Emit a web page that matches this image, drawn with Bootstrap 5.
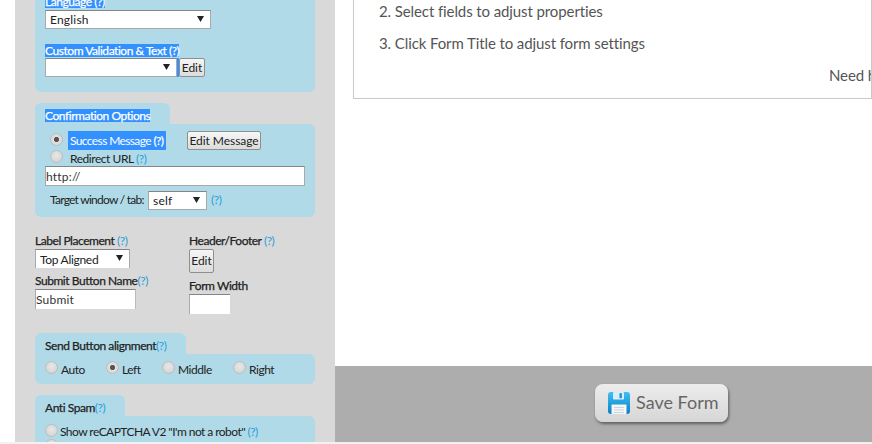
<!DOCTYPE html>
<html lang="en">
<head>
<meta charset="utf-8">
<title>Form builder</title>
<link href="https://cdn.jsdelivr.net/npm/bootstrap@5.3.0/dist/css/bootstrap.min.css" rel="stylesheet">
<style>
html,body{height:444px;width:872px;overflow:hidden;background:#fff;}
body{font-family:"Lato","Liberation Sans",sans-serif;font-size:12px;color:#222;line-height:1.2;letter-spacing:-.45px;}
.shell{height:442px;overflow:hidden;}
.gutter{width:15px;flex:none;}
.side{width:320px;flex:none;background:#d9d9d9;padding:0 20px;overflow:hidden;white-space:nowrap;}
.work{flex:1;min-width:0;}
.stage{height:366px;overflow:hidden;padding-left:18px;}
.tipsbox{height:99px;border:1px solid #c9c9c9;border-top:0;padding-left:25px;color:#555;font-size:15px;letter-spacing:-.1px;overflow:hidden;white-space:nowrap;}
.tipsbox p{margin:0;}
.tip2{padding-top:2px;height:34px;}
.tip3{height:32px;}
.need{padding-left:450px;}
.savebar{height:76px;background:#adadad;padding-left:260px;padding-top:18px;}
.savebtn{width:133px;height:38px;border:0;border-radius:8px;background:linear-gradient(#ededed,#d6d6d6);box-shadow:1px 2px 3px rgba(0,0,0,.45);color:#666;font-size:18px;font-family:"Lato",sans-serif;letter-spacing:0;padding:0 0 0 13px;gap:6px;}
.bottomline{height:2px;background:#f1f1f1;}
.panelbody{background:#b0dae8;border-radius:0 6px 6px 6px;}
.paneltab{background:#b0dae8;border-radius:6px 6px 0 0;padding-left:10px;display:block;}
.firstpanel{height:97px;margin-top:-5px;padding:0 10px;margin-bottom:11px;border-radius:0 0 6px 6px;}
.sel{color:#fff;background:#3390ff;}
.lbl{font-weight:400;-webkit-text-stroke:.25px currentColor;font-size:12px;line-height:13px;display:block;}
.lbl.sel{width:max-content;}
.lbl .hint{-webkit-text-stroke:0;}
.hint{color:#2a9fd8;font-weight:400;}
.sel .hint{color:#fff;-webkit-text-stroke:.25px #fff;}
.dropper{appearance:none;-webkit-appearance:none;border:1px solid #a9a9a9;border-top-color:#858585;background-color:#fff;background-image:url("data:image/svg+xml,%3Csvg xmlns='http://www.w3.org/2000/svg' width='7' height='6'%3E%3Cpath d='M0 0H7L3.5 6Z' fill='%23222'/%3E%3C/svg%3E");background-repeat:no-repeat;background-position:right 6px top 5px;font-size:12px;font-family:inherit;color:#222;padding:0 0 0 4px;height:19px;line-height:17px;border-radius:0;letter-spacing:.2px;outline:0;}
.d-lang{width:166px;display:block;margin-top:2px;}
.d-val{width:132px;}
.gaplang{height:15px;}
.valrow{padding-top:1px;}
.d-target{width:59px;}
.d-place{width:95px;display:block;border-bottom:0;margin-top:1px;letter-spacing:-.3px;}
.flatbtn{border:1px solid #8f8f8f;border-radius:2px;background:linear-gradient(#f6f6f6,#dcdcdc);font-size:12px;font-family:inherit;letter-spacing:-.05px;color:#222;padding:0;height:19px;line-height:16px;}
.edit1{width:26px;}
.caretbar{width:2px;height:19px;background:#3390ff;}
.textbox{border:1px solid #a9a9a9;border-top-color:#858585;background:#fff;font-size:12px;font-family:inherit;color:#333;padding:0;height:20px;border-radius:0;outline:0;display:block;letter-spacing:.2px;}
.tab-conf{width:135px;height:21px;padding-top:6px;}
.panel-conf{height:93px;padding:7px 10px 0;margin-bottom:17px;}
.radio{appearance:none;-webkit-appearance:none;width:13px;height:13px;border-radius:50%;border:1px solid #bdbdbd;background:radial-gradient(circle at 50% 40%,#e8e8e8,#cfcfcf);margin:0;flex:none;display:block;}
.radio:checked{background:radial-gradient(circle,#555 0,#555 28%,#e2e2e2 38%,#cfcfcf 100%);}
.rowmsg{padding-left:5px;height:19px;}
.rowmsg .radio{margin-top:-2px;}
.rowmsg .sel{margin-left:5px;width:98px;height:19px;padding:0 0 0 2px;line-height:19px;display:block;letter-spacing:-.62px;}
.rowmsg .flatbtn{margin-left:21px;width:74px;}
.rowurl{padding-left:5px;height:16px;}
.rowurl .radio{margin-top:-4px;}
.rowurl span.t{margin-left:7px;padding-top:2px;}
.url{width:260px;}
.rowtarget{padding:5px 0 0 5px;}
.targetlabel{width:98px;flex:none;letter-spacing:-.75px;}
.fields{height:99px;}
.colA{width:154px;flex:none;}
.lbl2{display:block;font-weight:400;-webkit-text-stroke:.25px currentColor;font-size:12px;line-height:14px;}
.lbl2 .hint{-webkit-text-stroke:0;}
.sbname{margin-top:6px;}
.sbbox{width:101px;margin-top:1px;border-bottom:0;border-right:1px solid #bbb;}
.editbtn2{display:block;width:25px;height:24px;margin-top:1px;}
.fwidth{margin-top:6px;}
.widthbox{width:41px;margin-top:1px;border-bottom:0;border-right:0;}
.tabsend{width:151px;height:21px;padding-top:6px;}
.panel-send{height:30px;margin-bottom:11px;padding:2px 0 0 10px;}
.panel-send .radio{margin-top:-5px;}
.ropt{gap:3px;}
.o1{width:61px;}.o2{width:56px;}.o3{width:71px;}
.tabspam{width:90px;height:21px;padding-top:6px;}
.panel-spam{height:60px;padding:9px 10px 0;}
.panel-spam .ropt{gap:2px;letter-spacing:-.55px;}
.panel-spam .ropt .radio{margin-top:-3px;}
</style>
</head>
<body>
<div class="shell d-flex">
  <div class="gutter"></div>
  <aside class="side">
    <div class="panelbody firstpanel">
      <span class="lbl sel">Language <span class="hint">(?)</span></span>
      <select class="dropper d-lang" aria-label="Language"><option>English</option></select>
      <div class="gaplang"></div>
      <span class="lbl sel">Custom Validation &amp; Text <span class="hint">(?)</span></span>
      <div class="d-flex valrow">
        <select class="dropper d-val" aria-label="Custom validation"><option></option></select>
        <span class="caretbar"></span>
        <button type="button" class="flatbtn edit1">Edit</button>
      </div>
    </div>

    <div class="paneltab tab-conf"><span class="lbl sel">Confirmation Options</span></div>
    <div class="panelbody panel-conf">
      <div class="d-flex align-items-center rowmsg">
        <input class="radio" type="radio" name="c" checked aria-label="Success Message">
        <span class="sel">Success Message <span class="hint">(?)</span></span>
        <button type="button" class="flatbtn">Edit Message</button>
      </div>
      <div class="d-flex align-items-center rowurl">
        <input class="radio" type="radio" name="c" aria-label="Redirect URL">
        <span class="t">Redirect URL <span class="hint">(?)</span></span>
      </div>
      <input class="textbox url" type="text" value="http://" aria-label="URL">
      <div class="d-flex align-items-center rowtarget">
        <span class="targetlabel">Target window / tab:</span>
        <select class="dropper d-target" aria-label="Target"><option>self</option></select>
        <span class="hint ms-1">(?)</span>
      </div>
    </div>

    <div class="d-flex fields">
      <div class="colA">
        <span class="lbl2">Label Placement <span class="hint">(?)</span></span>
        <select class="dropper d-place" aria-label="Label placement"><option>Top Aligned</option></select>
        <span class="lbl2 sbname">Submit Button Name<span class="hint">(?)</span></span>
        <input class="textbox sbbox" type="text" value="Submit" aria-label="Submit button name">
      </div>
      <div>
        <span class="lbl2">Header/Footer <span class="hint">(?)</span></span>
        <button type="button" class="flatbtn editbtn2">Edit</button>
        <span class="lbl2 fwidth">Form Width</span>
        <input class="textbox widthbox" type="text" aria-label="Form width">
      </div>
    </div>

    <div class="paneltab tabsend"><span class="lbl">Send Button alignment<span class="hint">(?)</span></span></div>
    <div class="panelbody panel-send d-flex align-items-center">
      <label class="d-flex align-items-center ropt o1"><input class="radio" type="radio" name="a">Auto</label>
      <label class="d-flex align-items-center ropt o2"><input class="radio" type="radio" name="a" checked>Left</label>
      <label class="d-flex align-items-center ropt o3"><input class="radio" type="radio" name="a">Middle</label>
      <label class="d-flex align-items-center ropt"><input class="radio" type="radio" name="a">Right</label>
    </div>

    <div class="paneltab tabspam"><span class="lbl">Anti Spam<span class="hint">(?)</span></span></div>
    <div class="panelbody panel-spam">
      <label class="d-flex align-items-center ropt"><input class="radio" type="radio" name="s"><span>Show reCAPTCHA V2 "I'm not a robot" <span class="hint">(?)</span></span></label>
      <input class="radio" type="radio" name="s" aria-label="Other anti spam option">
    </div>
  </aside>
  <main class="work">
    <div class="stage">
      <div class="tipsbox">
        <p class="tip2">2. Select fields to adjust properties</p>
        <p class="tip3">3. Click Form Title to adjust form settings</p>
        <p class="need">Need help? See our tutorials</p>
      </div>
    </div>
    <div class="savebar">
      <button type="button" class="savebtn d-flex align-items-center">
        <svg width="22" height="22" viewBox="0 0 22 22" aria-hidden="true">
          <defs><linearGradient id="fl" x1="0" y1="0" x2="0" y2="1"><stop offset="0" stop-color="#3fc0f0"/><stop offset="1" stop-color="#0a80c8"/></linearGradient></defs>
          <rect width="22" height="22" rx="3" fill="url(#fl)"/>
          <rect x="5" y="0" width="11" height="7.5" rx=".8" fill="#d9eef8"/>
          <rect x="11.5" y="1.2" width="2.4" height="5" fill="#1b8fcf"/>
          <rect x="3.5" y="12.5" width="15" height="9.5" rx=".6" fill="#f6f6f6"/>
          <path d="M6 15.5H16M6 18H16M6 20.5H16" stroke="#c3d0d7" stroke-width=".9"/>
        </svg>
        <span>Save Form</span>
      </button>
    </div>
  </main>
</div>
<div class="bottomline"></div>
<script src="https://cdn.jsdelivr.net/npm/bootstrap@5.3.0/dist/js/bootstrap.bundle.min.js"></script>
</body>
</html>
